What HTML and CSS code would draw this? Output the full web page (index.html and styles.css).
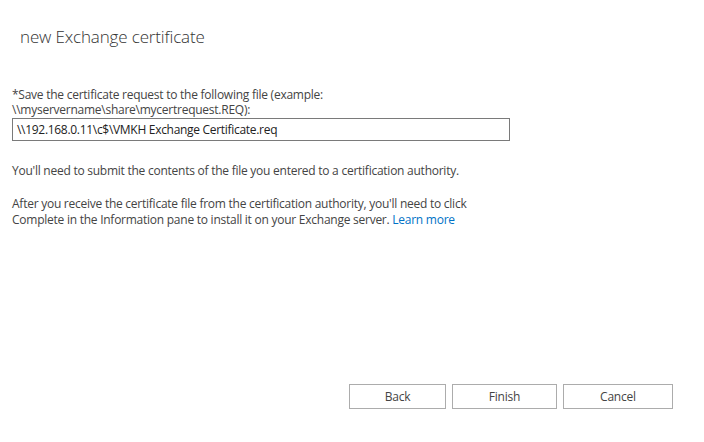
FILE: index.html
```html
<!DOCTYPE html>
<html>
<head>
<meta charset="utf-8">
<link rel="stylesheet" href="styles.css">
</head>
<body>
<div class="page">
  <h1 class="title">new Exchange certificate</h1>
  <div class="content">
    <label class="label" for="path">*Save the certificate request to the following file (example: \\myservername\share\mycertrequest.REQ):</label>
    <div class="field">\\192.168.0.11\c$\VMKH Exchange Certificate.req</div>
    <p class="para p1">You'll need to submit the contents of the file you entered to a certification authority.</p>
    <p class="para p2">After you receive the certificate file from the certification authority, you'll need to click Complete in the Information pane to install it on your Exchange server. <a class="link" href="#">Learn more</a></p>
  </div>
  <div class="spacer"></div>
  <div class="buttons">
    <button class="btn btn-back">Back</button>
    <button class="btn btn-finish">Finish</button>
    <button class="btn btn-cancel">Cancel</button>
  </div>
</div>
</body>
</html>
```
FILE: styles.css
```css
html, body {
  margin: 0;
  padding: 0;
  background: #ffffff;
}
body {
  width: 704px;
  height: 442px;
  overflow: hidden;
  font-family: "Open Sans", "Noto Sans", sans-serif;
  color: #333333;
}
.page {
  display: flex;
  flex-direction: column;
  height: 442px;
}
.title {
  margin: 26px 0 0 20px;
  font-size: 17px;
  font-weight: 300;
  color: #333333;
  line-height: 22px;
  letter-spacing: -0.15px;
}
.content {
  padding: 0 0 0 12px;
  margin-top: 39px;
  width: 480px;
}
.label {
  display: block;
  font-size: 12px;
  line-height: 15px;
  color: #444444;
  letter-spacing: -0.25px;
  width: 360px;
}
.field {
  margin-top: 1px;
  width: 492px;
  height: 21px;
  border: 1px solid #7a7a7a;
  box-sizing: content-box;
  padding: 0 0 0 4px;
  font-size: 12px;
  line-height: 21px;
  color: #222222;
  letter-spacing: -0.3px;
}
.para {
  margin: 0;
  font-size: 12px;
  line-height: 16px;
  color: #444444;
  letter-spacing: -0.25px;
}
.p1 { margin-top: 22px; }
.p2 { margin-top: 17px; width: 465px; }
.link {
  color: #0072c6;
  text-decoration: none;
}
.spacer { flex: 1; }
.buttons {
  display: flex;
  gap: 6px;
  padding-left: 349px;
  margin-bottom: 33px;
}
.btn {
  height: 25px;
  border: 1px solid #acacac;
  background: #ffffff;
  font-family: "Open Sans", "Noto Sans", sans-serif;
  font-size: 12px;
  color: #444444;
  padding: 0;
  letter-spacing: -0.2px;
}
.btn-back { width: 97px; }
.btn-finish { width: 105px; }
.btn-cancel { width: 110px; }
```
